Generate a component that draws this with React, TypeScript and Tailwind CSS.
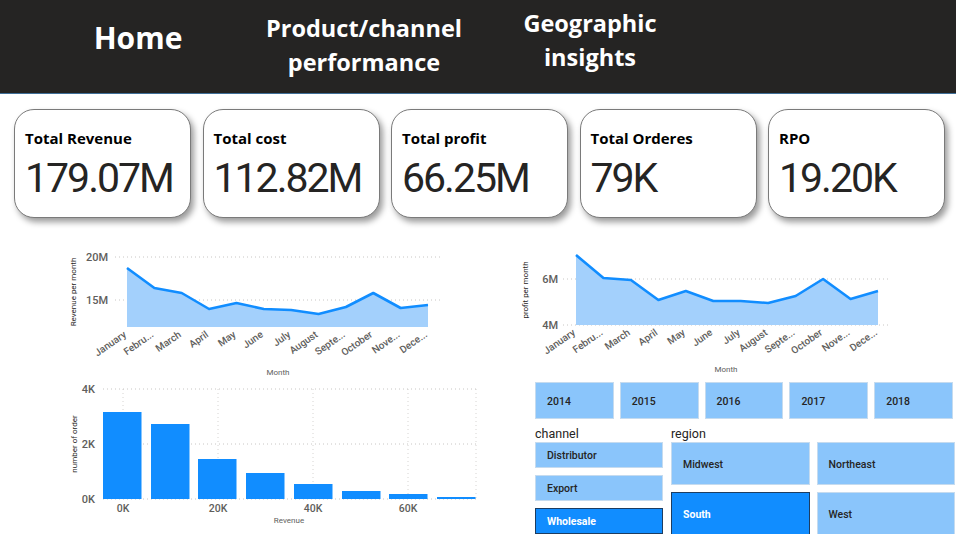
import React from "react";

const MONTHS = [
    "January", "Febru...", "March", "April", "May", "June",
    "July", "August", "Septe...", "October", "Nove...", "Dece..."
];

const cards = [
    { title: "Total Revenue", value: "179.07M" },
    { title: "Total cost", value: "112.82M" },
    { title: "Total profit", value: "66.25M" },
    { title: "Total Orderes", value: "79K" },
    { title: "RPO", value: "19.20K" },
];

// y pixel positions read off the report visuals
const revenueYs = [268, 288, 293, 309, 303, 309, 310, 314, 307, 293, 308, 305];
const profitYs = [255, 278, 280, 300, 291, 301, 301, 303, 296, 279, 299, 291];

const bars = [
    { x: 103, top: 412 }, { x: 151, top: 424 }, { x: 198, top: 459 }, { x: 246, top: 473 },
    { x: 294, top: 484 }, { x: 342, top: 491 }, { x: 389, top: 494 }, { x: 437, top: 497 },
];

interface AreaChartProps {
    viewBox: string;
    width: number;
    height: number;
    x0: number;
    x1: number;
    ys: number[];
    base: number;
    grid: { y: number; label: string }[];
    gridFrom: number;
    gridTo: number;
    labelEnd: number;
    title: string;
    titleX: number;
    titleY: number;
    monthX: number;
    monthY: number;
}

function AreaChart({
    viewBox, width, height, x0, x1, ys, base,
    grid, gridFrom, gridTo, labelEnd,
    title, titleX, titleY, monthX, monthY
}: AreaChartProps) {
    const step = (x1 - x0) / (ys.length - 1);
    const pts = ys.map((y, i) => [x0 + i * step, y]);
    const line = pts.map(([x, y], i) => `${i ? "L" : "M"}${x} ${y}`).join(" ");
    const area = `${line} L${x1} ${base} L${x0} ${base} Z`;

    return (
        <svg width={width} height={height} viewBox={viewBox} className="block font-['Roboto',sans-serif]">
            {grid.map(g => (
                <g key={g.label}>
                    <line x1={gridFrom} x2={gridTo} y1={g.y} y2={g.y} stroke="#c8c6c4" strokeDasharray="1 3" />
                    <text x={labelEnd} y={g.y + 4} textAnchor="end" fontSize="11" fontWeight="500" fill="#605e5c">{g.label}</text>
                </g>
            ))}
            <path d={area} fill="#a3d0fc" />
            <path d={line} fill="none" stroke="#118dff" strokeWidth="2.6" strokeLinejoin="round" />

            {pts.map(([x], i) => (
                <text
                    key={i}
                    x={x}
                    y={base + 9}
                    textAnchor="end"
                    fontSize="10"
                    fontWeight="500"
                    fill="#605e5c"
                    transform={`rotate(-35 ${x} ${base + 9})`}
                >
                    {MONTHS[i]}
                </text>
            ))}

            <text x={titleX} y={titleY} fontSize="8" fill="#252423" textAnchor="middle" transform={`rotate(-90 ${titleX} ${titleY})`}>
                {title}
            </text>
            <text x={monthX} y={monthY} fontSize="8" fill="#605e5c" textAnchor="middle">Month</text>
        </svg>
    );
}

function BarChart() {
    return (
        <svg width={490} height={154} viewBox="0 380 490 154" className="block font-['Roboto',sans-serif]">
            {[123, 218, 313, 408, 476].map(x => (
                <line key={x} x1={x} x2={x} y1={389} y2={499} stroke="#d6d4d2" strokeDasharray="1 3" />
            ))}
            {[{ y: 389, l: "4K" }, { y: 444, l: "2K" }, { y: 499, l: "0K" }].map(g => (
                <g key={g.l}>
                    <line x1={103} x2={476} y1={g.y} y2={g.y} stroke="#c8c6c4" strokeDasharray="1 3" />
                    <text x={95} y={g.y + 4} textAnchor="end" fontSize="11" fontWeight="500" fill="#605e5c">{g.l}</text>
                </g>
            ))}
            {bars.map(b => (
                <rect key={b.x} x={b.x} y={b.top} width={38.5} height={499 - b.top} fill="#118dff" />
            ))}
            {[{ x: 123, l: "0K" }, { x: 218, l: "20K" }, { x: 313, l: "40K" }, { x: 408, l: "60K" }].map(t => (
                <text key={t.l} x={t.x} y={512} textAnchor="middle" fontSize="10.5" fontWeight="500" fill="#605e5c">{t.l}</text>
            ))}
            <text x={289} y={523} textAnchor="middle" fontSize="8" fill="#605e5c">Revenue</text>
            <text x={77} y={444} textAnchor="middle" fontSize="8" fill="#252423" transform="rotate(-90 77 444)">number of order</text>
        </svg>
    );
}

function Tile({ label, active, className }: { label: string; active?: boolean; className: string }) {
    return (
        <div
            className={`flex items-center border px-[11px] pt-[2px] text-[10.5px] ${className} ${active
                ? "bg-[#118dff] border-[#1d3d61] text-white font-bold"
                : "bg-[#8ac5fb] border-[#c5dbef] text-[#252423] font-medium"
                }`}
        >
            {label}
        </div>
    );
}

export default function App() {
    return (
        <div className="w-[956px] h-[534px] overflow-hidden bg-white text-[#252423]">
            {/* Nav bar */}
            <div className="flex h-[94px] bg-[#252423] border-b border-[#3f6f98] pl-[25px] font-['Open_Sans',sans-serif] font-bold text-white text-center">
                <div className="w-[226px] pt-[21px] text-[30px] leading-[34px]">Home</div>
                <div className="w-[226px] pt-[11px] text-[23.5px] leading-[34px]">Product/channel<br />performance</div>
                <div className="w-[226px] pt-[6px] text-[23.5px] leading-[34px]">Geographic<br />insights</div>
            </div>

            {/* KPI cards */}
            <div className="mt-[15px] flex gap-[11.5px] pl-[14px]">
                {cards.map(c => (
                    <div
                        key={c.title}
                        className="h-[109px] w-[177px] rounded-[20px] border border-[#7a7a7a] bg-white px-[10px] pt-[18px] shadow-[3px_4px_6px_rgba(0,0,0,0.4)]"
                    >
                        <div className="font-['Open_Sans',sans-serif] text-[15px] font-bold leading-[20px] text-black">{c.title}</div>
                        <div className="mt-[10px] font-['Roboto',sans-serif] text-[41px] leading-[41px] tracking-[-2px] text-[#252423]">{c.value}</div>
                    </div>
                ))}
            </div>

            {/* Visuals */}
            <div className="mt-[22px] flex">
                <div className="w-[490px]">
                    <AreaChart
                        viewBox="0 240 490 140"
                        width={490}
                        height={140}
                        x0={127}
                        x1={428}
                        ys={revenueYs}
                        base={327}
                        grid={[{ y: 257, label: "20M" }, { y: 300, label: "15M" }]}
                        gridFrom={115}
                        gridTo={440}
                        labelEnd={108}
                        title="Revenue per month"
                        titleX={76}
                        titleY={292}
                        monthX={278}
                        monthY={375}
                    />
                    <BarChart />
                </div>

                <div className="w-[466px]">
                    <AreaChart
                        viewBox="490 240 466 142"
                        width={466}
                        height={142}
                        x0={576}
                        x1={878}
                        ys={profitYs}
                        base={325}
                        grid={[{ y: 279, label: "6M" }, { y: 325, label: "4M" }]}
                        gridFrom={563}
                        gridTo={888}
                        labelEnd={558}
                        title="profit per month"
                        titleX={528}
                        titleY={290}
                        monthX={726}
                        monthY={372}
                    />

                    <div className="pl-[45px] font-['Roboto',sans-serif]">
                        <div className="grid w-[418px] grid-cols-5 gap-[6px]">
                            {["2014", "2015", "2016", "2017", "2018"].map(y => (
                                <Tile key={y} label={y} className="h-[37px]" />
                            ))}
                        </div>

                        <div className="mt-[6px] flex gap-[8px]">
                            <div className="w-[128px]">
                                <div className="h-[17px] text-[12.5px] leading-[17px]">channel</div>
                                <div className="flex flex-col gap-[7px]">
                                    <Tile label="Distributor" className="h-[26px]" />
                                    <Tile label="Export" className="h-[26px]" />
                                    <Tile label="Wholesale" active className="h-[26px]" />
                                </div>
                            </div>
                            <div className="w-[284px]">
                                <div className="h-[17px] text-[12.5px] leading-[17px]">region</div>
                                <div className="grid grid-cols-2 gap-[7px]">
                                    <Tile label="Midwest" className="h-[43px]" />
                                    <Tile label="Northeast" className="h-[43px]" />
                                    <Tile label="South" active className="h-[43px]" />
                                    <Tile label="West" className="h-[43px]" />
                                </div>
                            </div>
                        </div>
                    </div>
                </div>
            </div>
        </div>
    );
}
